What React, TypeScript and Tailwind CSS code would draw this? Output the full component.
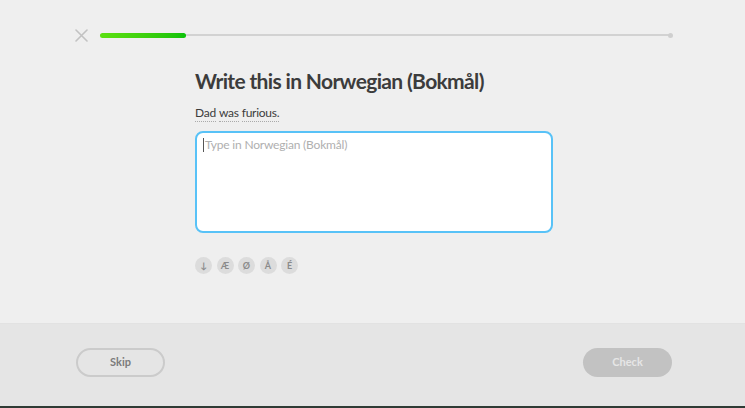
export default function App() {
  const chars = ["↓", "Æ", "Ø", "Å", "É"];
  const words = ["Dad", "was", "furious."];

  return (
    <div className="flex h-[408px] w-[745px] flex-col bg-[#efefef] font-['Lato',sans-serif] text-[#3c3c3c]">
      {/* Header */}
      <div className="flex h-[70px] items-center gap-[12px] px-[74px]">
        <button className="flex h-[14px] w-[14px] items-center justify-center">
          <svg width="13" height="13" viewBox="0 0 13 13">
            <path d="M1 1 L12 12 M12 1 L1 12" stroke="#c2c2c2" strokeWidth="1.6" strokeLinecap="round" />
          </svg>
        </button>
        <div className="relative flex h-[5px] flex-1 items-center">
          <div className="absolute left-0 right-0 h-[2px] bg-[#d2d2d2]" />
          <div className="absolute right-[-2px] h-[5px] w-[5px] rounded-full bg-[#cfcfcf]" />
          <div className="relative h-[5px] w-[86px] rounded-full bg-gradient-to-r from-[#5be011] to-[#08c20a]" />
        </div>
      </div>

      {/* Body */}
      <div className="flex flex-1 flex-col pl-[195px]">
        <h1 className="text-[21px] font-bold leading-[22px] tracking-[-0.65px] text-[#3c3c3c]">
          Write this in Norwegian (Bokmål)
        </h1>
        <p className="mt-[13px] flex gap-[3px] text-[12px] leading-[15px] tracking-[-0.25px] text-[#3c3c3c]">
          {words.map((w) => (
            <span key={w} className="border-b border-dotted border-[#aaaaaa] pb-[1px]">
              {w}
            </span>
          ))}
        </p>
        <div className="mt-[9px] h-[102px] w-[358px] rounded-[8px] border-2 border-[#58c2f7] bg-white px-[6px] py-[4px]">
          <div className="flex items-center text-[12px] leading-[15px] tracking-[-0.2px] text-[#afafaf]">
            <span className="mr-[1px] inline-block h-[14px] w-px bg-[#555555]" />
            Type in Norwegian (Bokmål)
          </div>
        </div>
        <div className="mt-[24px] flex gap-[4.5px]">
          {chars.map((c) => (
            <span
              key={c}
              className="flex h-[17px] w-[17px] items-center justify-center rounded-full bg-[#dcdcdc] text-[9px] font-bold text-[#8a8a8a]"
            >
              {c}
            </span>
          ))}
        </div>
      </div>

      {/* Footer */}
      <div className="flex h-[83px] items-start justify-between border-t border-[#e2e2e2] bg-[#e5e5e5] pl-[76px] pr-[73px] pt-[24px]">
        <button className="h-[29px] w-[89px] rounded-full border-2 border-[#cbcbcb] text-[11px] font-bold text-[#7b7b7b]">
          Skip
        </button>
        <button className="h-[29px] w-[89px] rounded-full bg-[#c2c2c2] text-[11px] font-bold text-[#e6e6e6]">
          Check
        </button>
      </div>
      <div className="h-[2px] bg-[#2f3b35]" />
    </div>
  );
}
